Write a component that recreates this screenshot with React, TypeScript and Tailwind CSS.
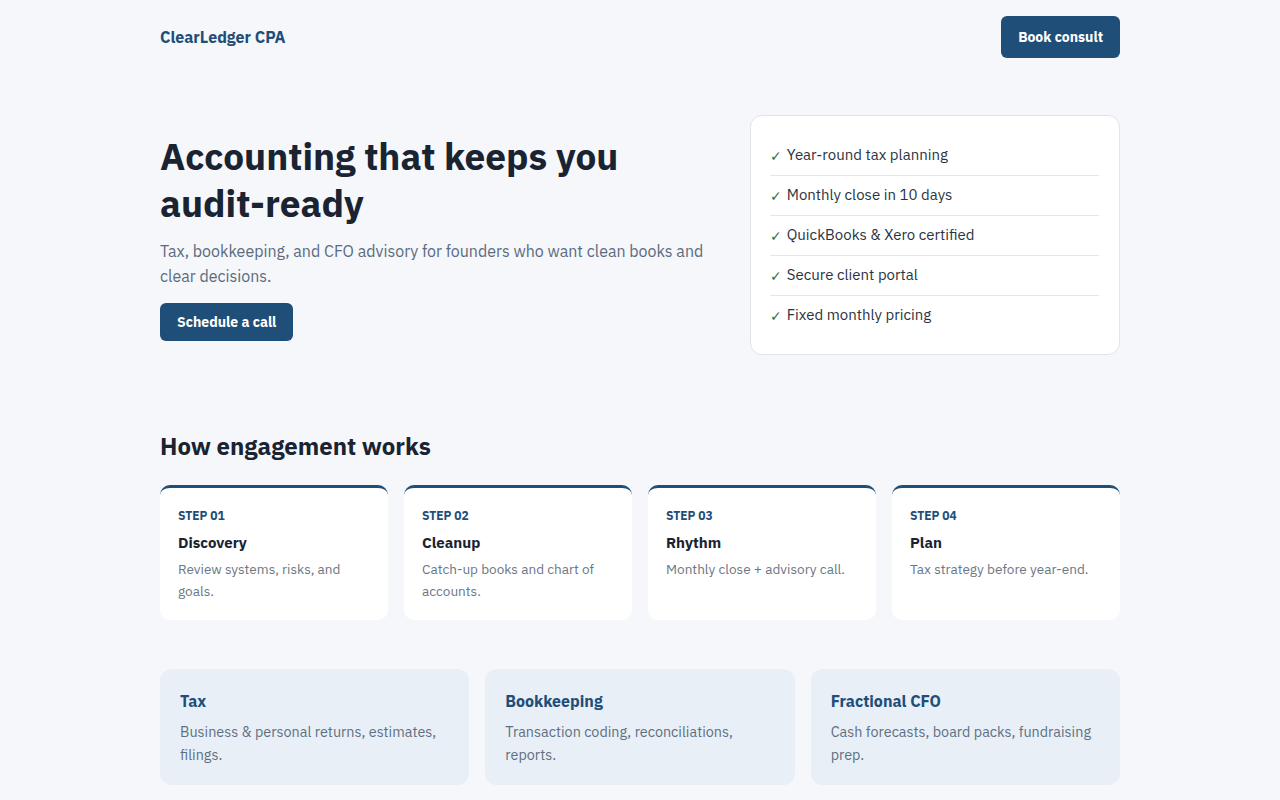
const features = [
  'Year-round tax planning',
  'Monthly close in 10 days',
  'QuickBooks & Xero certified',
  'Secure client portal',
  'Fixed monthly pricing',
];

const steps = [
  { step: 'STEP 01', title: 'Discovery', text: 'Review systems, risks, and goals.' },
  { step: 'STEP 02', title: 'Cleanup', text: 'Catch-up books and chart of accounts.' },
  { step: 'STEP 03', title: 'Rhythm', text: 'Monthly close + advisory call.' },
  { step: 'STEP 04', title: 'Plan', text: 'Tax strategy before year-end.' },
];

const services = [
  { title: 'Tax', text: 'Business & personal returns, estimates, filings.' },
  { title: 'Bookkeeping', text: 'Transaction coding, reconciliations, reports.' },
  { title: 'Fractional CFO', text: 'Cash forecasts, board packs, fundraising prep.' },
];

export default function App() {
  return (
    <div className="min-h-screen bg-[#f5f7fa] font-['IBM_Plex_Sans','Noto_Sans',sans-serif] text-[#1a2332]">
      <div className="max-w-[960px] mx-auto">
        {/* header */}
        <header className="flex items-center justify-between pt-4 pb-4">
          <span className="text-base font-bold text-[#1f4e79]">ClearLedger CPA</span>
          <button className="bg-[#1f4e79] text-white text-sm font-bold px-[17px] h-[42px] rounded-md">
            Book consult
          </button>
        </header>

        {/* hero */}
        <section className="grid grid-cols-[550px_1fr] gap-10 items-center pt-[41px]">
          <div className="pt-1">
            <h1 className="text-[37px] leading-[47px] font-bold text-[#1a2332]">
              Accounting that keeps you audit-ready
            </h1>
            <p className="mt-3 text-[16px] leading-[25px] text-[#5b6b7f]">
              Tax, bookkeeping, and CFO advisory for founders who want clean books and clear decisions.
            </p>
            <button className="mt-[14px] bg-[#1f4e79] text-white text-sm font-bold px-[17px] h-[38px] rounded-md">
              Schedule a call
            </button>
          </div>
          <div className="bg-white border border-[#dfe4ea] rounded-xl pl-[19px] pr-5 pt-5 pb-[19px]">
            {features.map((f, i) => (
              <div
                key={f}
                className={`flex items-center gap-[5px] text-[15px] text-[#2a3441] ${i > 0 ? 'border-t border-[#e3e7ec] h-10' : 'h-[39px]'}`}
              >
                <span className="font-['DejaVu_Sans',sans-serif] text-[14px] leading-none text-[#1b7a5a]">✓</span>
                <span>{f}</span>
              </div>
            ))}
          </div>
        </section>

        {/* engagement */}
        <section className="pt-[75px]">
          <h2 className="text-2xl font-bold text-[#1a2332]">How engagement works</h2>
          <div className="grid grid-cols-4 gap-4 mt-[23px]">
            {steps.map((s) => (
              <div key={s.step} className="bg-white rounded-[10px] border-t-[3px] border-[#1f4e79] px-[18px] pt-5 h-[135px]">
                <div className="text-xs font-bold text-[#1f4e79]">{s.step}</div>
                <div className="mt-[7px] text-[15px] leading-6 font-bold text-[#1a2332]">{s.title}</div>
                <p className="mt-[3px] text-[13.6px] leading-[22px] text-[#6b7785]">{s.text}</p>
              </div>
            ))}
          </div>
        </section>

        {/* services */}
        <section className="grid grid-cols-3 gap-4 mt-[49px] pb-10">
          {services.map((s) => (
            <div key={s.title} className="bg-[#e8eff7] rounded-xl p-5 h-[116px]">
              <div className="text-base leading-6 font-bold text-[#1f4e79]">{s.title}</div>
              <p className="mt-[7px] text-[14.4px] leading-[23px] text-[#5f6f82]">{s.text}</p>
            </div>
          ))}
        </section>
      </div>
    </div>
  );
}
